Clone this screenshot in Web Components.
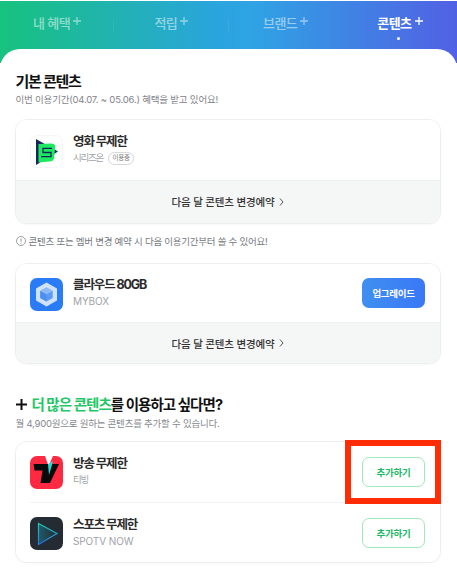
<!DOCTYPE html>
<html lang="ko"><head><meta charset="utf-8"><style>
html,body{margin:0;padding:0;background:#fff}
body{width:457px;height:572px;overflow:hidden;font-family:Inter,"Noto Sans CJK KR","Noto Sans",sans-serif;position:relative}
</style></head><body>
<app-tabs></app-tabs>
<app-panel>
  <sec-head style="--mt:22px" title-text="기본 콘텐츠" sub="이번 이용기간(04.07. ~ 05.06.) 혜택을 받고 있어요!"></sec-head>
  <svc-card style="--mt:12px">
    <svc-row name="영화 무제한" sub="시리즈온" badge="이용중" style="--h:60px;--sls:-1.2px;--sfs:9.500px"><svg slot="icon" viewBox="0 0 33 33" width="33" height="33"><rect x=".5" y=".5" width="32" height="32" rx="7" fill="#fff" stroke="#f4f5f6"/><path d="M6 4 28 16.500 6 30z" fill="#12265a"/><path d="M8.500 9 21 8.500q4.500 0 4.200 3.500l-1 10.500q-.5 4-4.500 4L8.500 27.500z" fill="#1ee85f"/><path d="M22 13.300H13v4.200h8v4.200H11" fill="none" stroke="#0d2a55" stroke-width="1.300"/></svg></svc-row>
    <card-foot style="--fh:41.500px"></card-foot>
  </svc-card>
  <info-note></info-note>
  <svc-card style="--mt:15.600px">
    <svc-row name="클라우드 80GB" sub="MYBOX" style="--h:58px"><svg slot="icon" viewBox="0 0 33 33" width="33" height="33"><rect width="33" height="33" rx="7" fill="#2a7bf6"/><path d="M16.500 4.500 27 10.500v12L16.500 28.500 6 22.500v-12z" fill="#cfe2fc"/><path d="M16.500 9.500 22.700 13v7L16.500 23.500 10.300 20v-7z" fill="#5b9bf3"/><path d="M16.500 9.500 22.700 13 16.500 16.500 10.300 13z" fill="#8abaf8"/><path d="M16.500 16.500v7L10.300 20v-7z" fill="#4d8ff0"/></svg><app-btn slot="action" kind="solid">업그레이드</app-btn></svc-row>
    <card-foot style="--fh:40px"></card-foot>
  </svc-card>
  <more-head></more-head>
  <svc-card style="--mt:9.700px">
    <svc-row name="방송 무제한" sub="티빙" style="--h:60.500px;--sls:-1.2px;--sfs:9.500px"><svg slot="icon" viewBox="0 0 33 33" width="33" height="33"><rect width="33" height="33" rx="7" fill="#ff2a42"/><path d="M15 0h8l-4.500 10z" fill="#fff"/><path d="M3.500 8H19.500L20 13.500 22 8H29L20 27H10.500L12.500 14.500H4.500z" fill="#0a0a0a"/><path d="M18 8l5-3-4 14z" fill="#27dcd8"/></svg><app-btn slot="action">추가하기</app-btn></svc-row>
    <svc-row name="스포츠 무제한" sub="SPOTV NOW" divided style="--h:60px"><svg slot="icon" viewBox="0 0 33 33" width="33" height="33"><defs><linearGradient id="pg" x1="0" y1="0" x2="0" y2="1"><stop offset="0" stop-color="#19d0b4"/><stop offset="1" stop-color="#2b6fe0"/></linearGradient><linearGradient id="pf" x1="0" y1="0" x2="1" y2="0"><stop offset="0" stop-color="#1f5a68"/><stop offset="1" stop-color="#262c34"/></linearGradient></defs><rect width="33" height="33" rx="7" fill="#252b33"/><path d="M8.500 6.500 27 16.500 8.500 27.500z" fill="url(#pf)" stroke="url(#pg)" stroke-width="1.200"/></svg><app-btn slot="action">추가하기</app-btn></svc-row>
  </svc-card>
</app-panel>
<red-mark></red-mark>
<script>
const def=(name,css,html)=>customElements.define(name,class extends HTMLElement{
  connectedCallback(){ if(this.shadowRoot) return;
    const r=this.attachShadow({mode:"open"});
    const a=k=>this.getAttribute(k)||"";
    r.innerHTML=`<style>${css}</style>`+(typeof html==="function"?html(a,this):html);
  }
});
def("app-tabs",`
:host{display:flex;height:62px;margin-top:1px;background:linear-gradient(90deg,#17c27e 0%,#2aa4df 48%,#2fa3e4 55%,#5260e4 100%);color:#fff;font-size:13px;letter-spacing:-.5px;box-sizing:border-box}
.t{flex:1;height:24px;margin-top:9px;display:flex;align-items:center;justify-content:center;gap:3px;opacity:.5;font-weight:500;position:relative}
.t+.t::before{content:"";position:absolute;left:-1px;top:9px;height:13px;width:1px;background:rgba(255,255,255,.14)}
.t.on{opacity:1;font-weight:700}
.t.on::after{content:"";position:absolute;left:50%;margin-left:-3px;top:27px;width:3px;height:3px;border-radius:50%;background:#fff}
.t.on::before{display:none}
svg{width:8px;height:8px;margin-top:-2px}
`,()=>["내 혜택","적립","브랜드","콘텐츠"].map((t,i)=>`<div class="t${i==3?" on":""}"><span>${t}</span><svg viewBox="0 0 8 8"><path d="M4 0v8M0 4h8" stroke="#fff" stroke-width="1.300"/></svg></div>`).join(""));
def("app-panel",`:host{display:block;margin-top:-14px;background:#fff;border-radius:20px 20px 0 0;padding:1px 16.500px 0 14.500px;position:relative;color:#111}`,`<slot></slot>`);
def("sec-head",`:host{display:block;margin-top:var(--mt,0)}
h2{margin:0;font-size:15px;line-height:20px;font-weight:700;color:#111;letter-spacing:-1.25px;padding-left:1px}
p{margin:1px 0 0;font-size:9.500px;line-height:14px;color:#7f8388;padding-left:1px;letter-spacing:-.2px}`,a=>`<h2>${a("title-text")}</h2><p>${a("sub")}</p>`);
def("svc-card",`:host{display:block;margin-top:var(--mt,0);border:1px solid #eceef0;border-radius:12px;overflow:hidden;box-shadow:0 1px 2px rgba(0,0,0,.03);background:#fff}`,`<slot></slot>`);
def("svc-row",`:host{display:block;background:#fff;padding:0 14.500px 0 14.500px}
.r{height:var(--h,60px);display:flex;align-items:center;gap:10px;box-sizing:border-box}
.r.d{border-top:1px solid #f0f1f2}
.ic{width:33px;height:33px;flex:none;display:flex;margin-top:2px}
.tx{flex:1;min-width:0;margin-top:-2px}
.n{font-size:12.500px;line-height:18px;font-weight:700;color:#2b2b2b;letter-spacing:-1.1px}
.s{font-size:10px;line-height:14px;color:#a0a3a8;display:flex;align-items:center;gap:5px}
.s span:first-child{letter-spacing:var(--sls,-.1px);font-size:var(--sfs,10px)}
.b{font-size:6.500px;line-height:11px;height:11px;width:24px;text-align:center;border:1px solid #d5d7da;border-radius:7px;color:#777;letter-spacing:-.2px}
`,(a,el)=>`<div class="r${el.hasAttribute("divided")?" d":""}"><div class="ic"><slot name="icon"></slot></div><div class="tx"><div class="n">${a("name")}</div><div class="s"><span>${a("sub")}</span>${a("badge")?`<span class="b">${a("badge")}</span>`:""}</div></div><slot name="action"></slot></div>`);
def("card-foot",`:host{display:flex;align-items:center;justify-content:center;gap:4px;height:var(--fh,42px);background:#f5f6f6;border-top:1px solid #eef0f1;font-size:10.500px;font-weight:500;color:#333;letter-spacing:-.15px}svg{width:5px;height:8px}`,`<span>다음 달 콘텐츠 변경예약</span><svg viewBox="0 0 5 8"><path d="M1 .5 4 4 1 7.500" fill="none" stroke="#555" stroke-width="1"/></svg>`);
def("info-note",`:host{display:flex;align-items:center;gap:3px;margin-top:10px;height:14px;font-size:9.500px;color:#75797e;padding-left:1px;letter-spacing:-.25px}svg{width:10px;height:10px;flex:none}`,`<svg viewBox="0 0 10 10"><circle cx="5" cy="5" r="4.500" fill="none" stroke="#888" stroke-width=".8"/><path d="M5 2.500v3.200M5 6.700v1" stroke="#888" stroke-width=".9"/></svg><span>콘텐츠 또는 멤버 변경 예약 시 다음 이용기간부터 쓸 수 있어요!</span>`);
def("more-head",`:host{display:block;margin-top:30.500px}
h2{margin:0;font-size:14.500px;line-height:20px;font-weight:700;color:#111;letter-spacing:-.95px;display:flex;align-items:center;gap:5px;padding-left:1px}
em{font-style:normal;color:#1fc766}
svg{width:11px;height:11px;flex:none}
p{margin:2.300px 0 0;font-size:9.500px;line-height:14px;color:#85898e;padding-left:1px;letter-spacing:-.23px}`,`<h2><svg viewBox="0 0 11 11"><path d="M5.500 0v11M0 5.500h11" stroke="#111" stroke-width="2"/></svg><span><em>더 많은 콘텐츠</em>를 이용하고 싶다면?</span></h2><p>월 4,900원으로 원하는 콘텐츠를 추가할 수 있습니다.</p>`);
def("app-btn",`:host{display:flex;flex:none;width:63px;height:30px;box-sizing:border-box;align-items:center;justify-content:center;border-radius:7px;font-size:9.500px;font-weight:700;border:1px solid #9fe9bd;color:#1cb866;background:#fff;letter-spacing:-.3px}
:host([kind=solid]){border:none;background:linear-gradient(90deg,#3f8ff0,#3a78f7);color:#fff}`,`<slot></slot>`);
def("red-mark",`:host{position:absolute;left:344.500px;top:440px;width:96.500px;height:63.500px;box-sizing:border-box;border:6px solid #ff2c06}`,``);
</script>
</body></html>
